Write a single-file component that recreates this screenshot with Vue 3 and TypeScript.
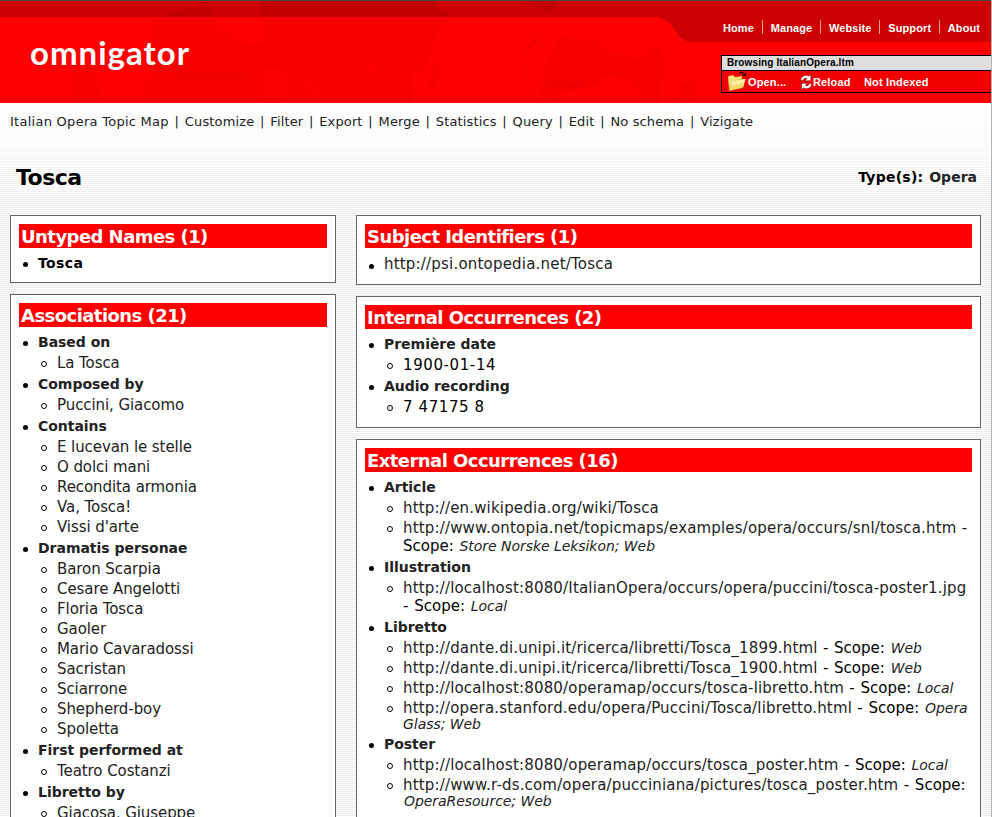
<script setup lang="ts">
interface Entry { text: string; scope?: string }
interface Group { title: string; items: Entry[] }

const siteLinks: string[] = ['Home', 'Manage', 'Website', 'Support', 'About']
const menu: string[] = ['Italian Opera Topic Map', 'Customize', 'Filter', 'Export', 'Merge', 'Statistics', 'Query', 'Edit', 'No schema', 'Vizigate']

const plain = (...names: string[]): Entry[] => names.map((text) => ({ text }))

const associations: Group[] = [
  { title: 'Based on', items: plain('La Tosca') },
  { title: 'Composed by', items: plain('Puccini, Giacomo') },
  { title: 'Contains', items: plain('E lucevan le stelle', 'O dolci mani', 'Recondita armonia', 'Va, Tosca!', "Vissi d'arte") },
  { title: 'Dramatis personae', items: plain('Baron Scarpia', 'Cesare Angelotti', 'Floria Tosca', 'Gaoler', 'Mario Cavaradossi', 'Sacristan', 'Sciarrone', 'Shepherd-boy', 'Spoletta') },
  { title: 'First performed at', items: plain('Teatro Costanzi') },
  { title: 'Libretto by', items: plain('Giacosa, Giuseppe') },
]
const internal: Group[] = [
  { title: 'Première date', items: plain('1900-01-14') },
  { title: 'Audio recording', items: plain('7 47175 8') },
]
const external: Group[] = [
  { title: 'Article', items: [
    { text: 'http://en.wikipedia.org/wiki/Tosca' },
    { text: 'http://www.ontopia.net/topicmaps/examples/opera/occurs/snl/tosca.htm', scope: 'Store Norske Leksikon; Web' },
  ] },
  { title: 'Illustration', items: [
    { text: 'http://localhost:8080/ItalianOpera/occurs/opera/puccini/tosca-poster1.jpg', scope: 'Local' },
  ] },
  { title: 'Libretto', items: [
    { text: 'http://dante.di.unipi.it/ricerca/libretti/Tosca_1899.html', scope: 'Web' },
    { text: 'http://dante.di.unipi.it/ricerca/libretti/Tosca_1900.html', scope: 'Web' },
    { text: 'http://localhost:8080/operamap/occurs/tosca-libretto.htm', scope: 'Local' },
    { text: 'http://opera.stanford.edu/opera/Puccini/Tosca/libretto.html', scope: 'Opera Glass; Web' },
  ] },
  { title: 'Poster', items: [
    { text: 'http://localhost:8080/operamap/occurs/tosca_poster.htm', scope: 'Local' },
    { text: 'http://www.r-ds.com/opera/pucciniana/pictures/tosca_poster.htm', scope: 'OperaResource; Web' },
  ] },
]
</script>

<template>
  <div class="page">
    <header class="banner">
      <svg class="map" viewBox="0 0 992 103" width="992" height="103" aria-hidden="true">
        <rect width="992" height="103" fill="#f00" />
        <g fill="#f60000">
          <path d="M143 103 L144 90 L152 72 L149 50 L155 25 L160 17 L200 8 L214 17 L222 32 L240 40 L258 45 L266 54 L288 57 L312 74 L330 84 L330 103 Z" />
          <path d="M262 1 L262 28 L268 36 L258 45 L266 54 L288 57 L312 74 L330 84 V103 H412 V73 L425 70 L432 50 L437 35 L440 22 L450 18 L440 1 Z" />
          <path d="M70 103 L73 78 L78 68 L90 66 L98 76 L98 85 L102 103 Z" />
          <path d="M434 62 L442 64 L440 75 L434 88 L428 87 Z" />
          <path d="M520 70 L528 68 L525 52 L530 42 L540 33 L542 40 L532 46 L528 58 L527 80 L531 102 L524 78 Z" />
          <path d="M541 103 L542 75 L548 65 L547 56 L557 47 L556 38 L566 35 L576 39 L585 37 L600 42 L608 54 L625 54 L640 61 L650 50 L661 46 L662 70 L660 103 H640 L638 88 L625 80 L615 75 L602 77 L596 84 L560 93 L556 103 Z" />
          <path d="M676 103 L681 84 L692 80 L699 88 L694 103 Z" />
        </g>
        <path d="M262 66 Q258 80 270 90 L258 103 H288 L287 76 L290 70 Z M302 70 L312 80 L320 98 L308 90 Z" fill="#fc0000" />
        <path d="M222 28 L240 1 M260 65 L290 58 M410 86 L436 103 M497 5 Q530 30 545 55" stroke="#ee0000" fill="none" />
        <path d="M0 1 H992 V42 H694 C671 42 679 17 652 17 H0 Z" fill="#c00" />
        <path d="M165 17 C180 10 190 8 208 7 L214 17 Z M262 17 L261 1 H436 L440 9 L449 14 L448 17 Z M524 1 H557 L558 7 L545 12 Z" fill="#c20000" />
        <g font-family="Lato, sans-serif" fill="#ed0000">
          <text x="174" y="79" font-size="14" textLength="70">Knowledge</text>
          <text x="339" y="57" font-size="14" textLength="73" fill="#fd0000">Information</text>
          <text x="399" y="31" font-size="9" fill="#fd0000">Unify</text>
          <text x="546" y="88" font-size="9">Ontologies</text>
        </g>
        <g fill="#fd0000"><circle cx="209" cy="88" r="5" /><circle cx="374" cy="66" r="5" /><circle cx="408" cy="36" r="2" /><circle cx="567" cy="92" r="2" /></g>
        <path d="M344 100 Q360 82 374 80 M380 66 Q430 60 408 36" stroke="#fd0000" stroke-dasharray="4 3" fill="none" />
        <path d="M112 98 L123 73 M126 73 L141 98" stroke="#f00000" stroke-dasharray="4 3" fill="none" />
        <rect width="992" height="1" fill="#444" />
      </svg>
      <div class="banner-row">
        <div class="logo">omnigator</div>
        <div class="side">
          <nav class="site">
            <template v-for="(l, i) in siteLinks" :key="l"><i v-if="i" class="bar"></i><a>{{ l }}</a></template>
          </nav>
          <div class="panel">
            <div class="panel-title">Browsing ItalianOpera.ltm</div>
            <div class="panel-tools">
              <svg class="folder" width="20" height="20" viewBox="0 0 20 20">
                <path d="M1 5 L6 4 L8 6 L15 5 L15 8 L18.500 8 L16 17 L2 20 Z" fill="#d9a93a" />
                <path d="M1.500 5.500 L6 4.500 L8 6.500 L14.500 5.500 V8 L5 10 L2 17 Z" fill="#ffe47a" />
                <path d="M5 10 L18.500 8 L16 16 L3 19 Z" fill="#fff2a6" />
                <path d="M4.500 14 L17 12 L16 16 L3 19 Z" fill="#f7da6c" />
                <path d="M12.500 2.500 Q14.500 .5 17 2.500" stroke="#300" stroke-width="1.200" fill="none" /><path d="M19 1 V5 H15 Z" fill="#200" />
              </svg>
              <a class="open">Open...</a>
              <svg class="reload" width="13" height="16" viewBox="0 0 13 16">
                <g stroke="#700" stroke-width=".5" fill="#fff">
                  <path d="M.8 6.500 Q1 1.500 6 1.300 Q7.500 1.300 8.800 2 L10.800 .4 V6.800 H5 L7 4.500 Q4 3.600 2.800 6.500 Z" />
                  <path transform="rotate(180 6.200 8)" d="M.8 6.500 Q1 1.500 6 1.300 Q7.500 1.300 8.800 2 L10.800 .4 V6.800 H5 L7 4.500 Q4 3.600 2.800 6.500 Z" />
                </g>
              </svg>
              <a class="rel">Reload</a>
              <a>Not Indexed</a>
            </div>
          </div>
        </div>
      </div>
    </header>

    <nav class="menu">
      <template v-for="(m, i) in menu" :key="m"><span v-if="i" class="sep">|</span><a>{{ m }}</a></template>
    </nav>

    <div class="title-row">
      <h1>Tosca</h1>
      <div class="types">Type(s): <a>Opera</a></div>
    </div>

    <main class="columns">
      <div class="col left">
        <section class="box">
          <h2>Untyped Names (1)</h2>
          <ul><li class="group"><b class="name">Tosca</b></li></ul>
        </section>
        <section class="box">
          <h2>Associations (21)</h2>
          <ul>
            <li v-for="g in associations" :key="g.title" class="group"><b>{{ g.title }}</b>
              <ul class="sub"><li v-for="e in g.items" :key="e.text"><a>{{ e.text }}</a></li></ul>
            </li>
          </ul>
        </section>
      </div>
      <div class="col right">
        <section class="box">
          <h2>Subject Identifiers (1)</h2>
          <ul class="ids"><li class="group"><a>http://psi.ontopedia.net/Tosca</a></li></ul>
        </section>
        <section class="box">
          <h2>Internal Occurrences (2)</h2>
          <ul>
            <li v-for="g in internal" :key="g.title" class="group"><b>{{ g.title }}</b>
              <ul class="sub"><li v-for="e in g.items" :key="e.text"><span class="value">{{ e.text }}</span></li></ul>
            </li>
          </ul>
        </section>
        <section class="box">
          <h2>External Occurrences (16)</h2>
          <ul>
            <li v-for="g in external" :key="g.title" class="group"><b>{{ g.title }}</b>
              <ul class="sub">
                <li v-for="e in g.items" :key="e.text"><a>{{ e.text }}</a><template v-if="e.scope"><span class="dash">{{ ' - ' }}</span><span>{{ 'Scope: ' }}</span><em>{{ e.scope }}</em></template></li>
              </ul>
            </li>
          </ul>
        </section>
      </div>
    </main>
  </div>
</template>

<style>
html, body { margin: 0; height: 817px; overflow: hidden; }
</style>

<style scoped>
.page {
  box-sizing: border-box;
  width: 992px;
  height: 817px;
  overflow: hidden;
  border-right: 1px solid #b4b4b4;
  font-family: Verdana, "DejaVu Sans", sans-serif;
  color: #000;
  background:
    linear-gradient(to bottom, #fff 103px, rgba(255, 255, 255, 0) 215px),
    repeating-linear-gradient(to bottom, #fff 0, #fff 1px, #ebebeb 1px, #ebebeb 2px);
}
.banner { position: relative; height: 103px; overflow: hidden; }
.map { position: absolute; left: 0; top: 0; }
.banner-row { position: relative; display: flex; justify-content: space-between; height: 103px; }
.logo { padding: 32px 0 0 30px; font: 700 33px/40px Lato, sans-serif; color: #fff; letter-spacing: 1px; }
.side { width: 270px; font-family: "Liberation Sans", Arial, sans-serif; font-weight: 700; }
.site { display: flex; align-items: center; height: 16px; margin-top: 20px; padding-left: 2px; font-size: 11px; letter-spacing: 0.1px; color: #fff; white-space: nowrap; }
.bar { width: 1px; height: 14px; margin: 0 8px 2px 7.7px; background: #f0a0a0; }
.panel { margin-top: 19px; border: 1px solid #000; border-right: 0; }
.panel-title { height: 14px; padding-left: 5px; border-bottom: 1px solid #000; background: #dedede; font-size: 10px; line-height: 14px; letter-spacing: 0.12px; }
.panel-tools { display: flex; align-items: center; height: 21px; padding-left: 6px; background: #f20000; color: #fff; font-size: 11px; letter-spacing: 0.15px; white-space: nowrap; }
.folder { margin: -1px 1px 0 -1px; }
.open { width: 52px; }
.rel { width: 51px; }
.menu { display: flex; height: 37px; padding-left: 10px; align-items: center; font-size: 13px; letter-spacing: 0.13px; white-space: nowrap; color: #222; }
.menu a:first-child { letter-spacing: 0.27px; }
.sep { width: 16px; text-align: center; }
.title-row { display: flex; justify-content: space-between; align-items: center; height: 75px; padding: 0 14px 0 16px; }
h1 { margin: 0; font-size: 22px; line-height: 26px; letter-spacing: -0.5px; }
.types { margin-top: -2px; font-size: 14px; font-weight: 700; letter-spacing: 0.25px; word-spacing: 0.7px; }
.types a { color: #222; letter-spacing: 0; }
.columns { display: flex; gap: 20px; padding: 0 10px; align-items: flex-start; }
.left { width: 326px; }
.right { width: 625px; }
.col { display: flex; flex-direction: column; gap: 11px; }
.box { box-sizing: border-box; padding: 8px 8px 9px; border: 1px solid #666; background: #fff; }
h2 { margin: 0; padding: 1px 0 0 2px; height: 23px; font-size: 18px; line-height: 23px; letter-spacing: -0.55px; color: #fff; background: #f00; white-space: nowrap; }
ul { list-style: none; margin: 5px 0 0; padding: 0; }
.group { position: relative; padding-left: 19px; }
.group > b, .ids a { display: block; height: 22px; line-height: 20px; font-size: 14px; color: #222; letter-spacing: -0.03px; }
.ids a { line-height: 22px; font-size: 15px; letter-spacing: 0.2px; }
.group > b.name { height: 20px; color: #000; letter-spacing: 0.4px; }
.group::before { content: ""; position: absolute; left: 4px; top: 9px; width: 5px; height: 5px; border-radius: 50%; background: #000; }
.ids .group::before { top: 11px; }
.sub { margin: 0; }
.sub li { position: relative; padding-left: 19px; margin-bottom: 2px; font-size: 13px; line-height: 15px; }
.sub li::before { content: ""; position: absolute; left: 3px; top: 7px; width: 4px; height: 4px; border: 1px solid #000; border-radius: 50%; }
.sub a, .sub span { font-size: 15px; line-height: 18px; }
.sub a { color: #222; }
.left .sub a { letter-spacing: -0.08px; }
.right .sub a { letter-spacing: 0.17px; }
.sub .value { letter-spacing: 0.6px; }
.sub .dash { letter-spacing: 0.5px; }
em { margin-left: 1px; font-size: 14px; line-height: 15px; letter-spacing: -0.05px; color: #222; }
</style>
